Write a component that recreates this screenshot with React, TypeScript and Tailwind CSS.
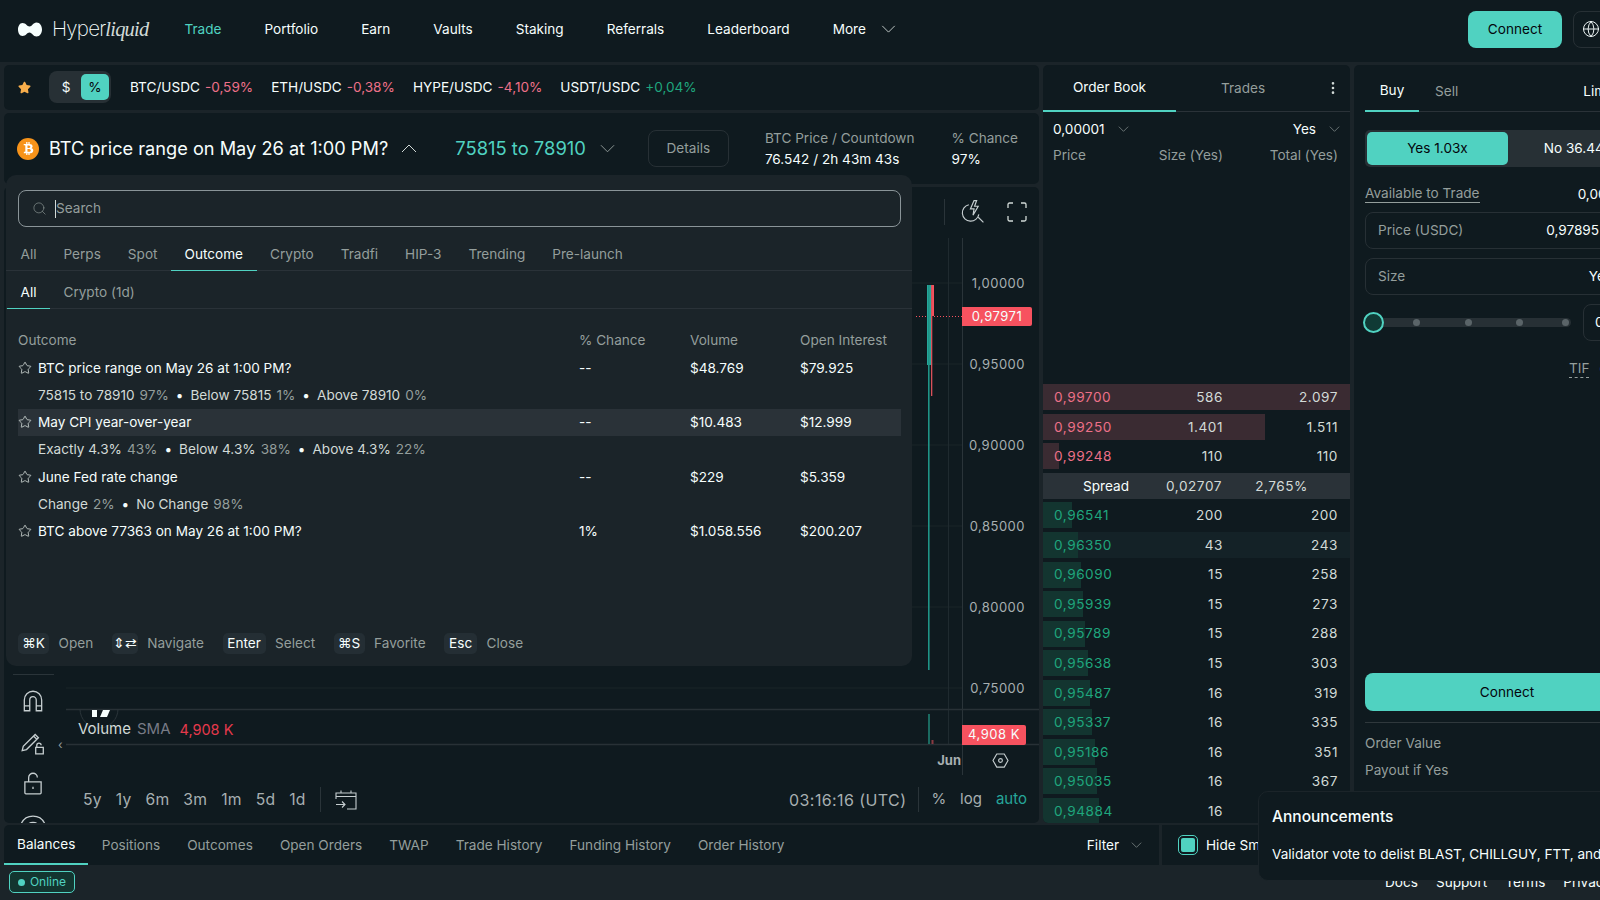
import { Search, Star, Globe, EllipsisVertical } from "lucide-react";
import { FaBtc, FaStar } from "react-icons/fa";

const Chevron = ({ up = false, className = "" }: { up?: boolean; className?: string }) => (
  <svg viewBox="0 0 16 9" fill="none" stroke="currentColor" strokeWidth="1" className={className}>
    <polyline points={up ? "1,8 8,1 15,8" : "1,1 8,8 15,1"} />
  </svg>
);

const navItems = ["Portfolio", "Earn", "Vaults", "Staking", "Referrals", "Leaderboard"];

const tickers = [
  { name: "BTC/USDC", value: "-0,59%", up: false },
  { name: "ETH/USDC", value: "-0,38%", up: false },
  { name: "HYPE/USDC", value: "-4,10%", up: false },
  { name: "USDT/USDC", value: "+0,04%", up: true },
];

const asks = [
  { price: "0,99700", size: "586", total: "2.097", bar: 308 },
  { price: "0,99250", size: "1.401", total: "1.511", bar: 222 },
  { price: "0,99248", size: "110", total: "110", bar: 16 },
];

const bids = [
  { price: "0,96541", size: "200", total: "200", bar: 29 },
  { price: "0,96350", size: "43", total: "243", bar: 35 },
  { price: "0,96090", size: "15", total: "258", bar: 38 },
  { price: "0,95939", size: "15", total: "273", bar: 40 },
  { price: "0,95789", size: "15", total: "288", bar: 42 },
  { price: "0,95638", size: "15", total: "303", bar: 45 },
  { price: "0,95487", size: "16", total: "319", bar: 47 },
  { price: "0,95337", size: "16", total: "335", bar: 49 },
  { price: "0,95186", size: "16", total: "351", bar: 52 },
  { price: "0,95035", size: "16", total: "367", bar: 54 },
  { price: "0,94884", size: "16", total: "383", bar: 56 },
];

const markets = [
  {
    name: "BTC price range on May 26 at 1:00 PM?",
    chance: "--",
    volume: "$48.769",
    oi: "$79.925",
    subs: [
      ["75815 to 78910", "97%"],
      ["Below 75815", "1%"],
      ["Above 78910", "0%"],
    ],
  },
  {
    name: "May CPI year-over-year",
    chance: "--",
    volume: "$10.483",
    oi: "$12.999",
    hover: true,
    subs: [
      ["Exactly 4.3%", "43%"],
      ["Below 4.3%", "38%"],
      ["Above 4.3%", "22%"],
    ],
  },
  {
    name: "June Fed rate change",
    chance: "--",
    volume: "$229",
    oi: "$5.359",
    subs: [
      ["Change", "2%"],
      ["No Change", "98%"],
    ],
  },
  { name: "BTC above 77363 on May 26 at 1:00 PM?", chance: "1%", volume: "$1.058.556", oi: "$200.207", subs: [] },
];

const hints = [
  { key: "⌘K", label: "Open", className: "w-[31px]" },
  { key: "⇕⇄", label: "Navigate", className: "w-[26px]" },
  { key: "Enter", label: "Select", className: "w-[43px]" },
  { key: "⌘S", label: "Favorite", className: "w-[31px]" },
  { key: "Esc", label: "Close", className: "w-[33px]" },
];

const sliderDots = ["ml-[48.5px]", "ml-[45px]", "ml-[44px]", "ml-[39px]"];

const BookRow = ({ row, side, hover }: { row: { price: string; size: string; total: string; bar: number }; side: "ask" | "bid"; hover?: boolean }) => (
  <div className={`relative h-[26px] ${hover ? "bg-[#142227]" : ""}`}>
    <div
      className={`absolute left-0 top-0 h-full ${side === "ask" ? "bg-[#3a2b32]" : "bg-[#133530]"}`}
      style={{ width: row.bar }}
    />
    <div className="relative grid h-full grid-cols-[89px_80px_115px] items-center px-[11px] text-[13.6px] tracking-[0.55px] text-[#d2dad7]">
      <span className={side === "ask" ? "text-[#ed7088]" : "text-[#1fa67d]"}>{row.price}</span>
      <span className="text-right">{row.size}</span>
      <span className="text-right">{row.total}</span>
    </div>
  </div>
);

const MarketDropdown = () => (
  <div className="absolute left-[6px] top-[175px] flex h-[491px] w-[906px] flex-col rounded-[10px] bg-[#1b2429] text-[13.6px]">
    <div className="mx-[12px] mt-[15px] flex h-[37px] w-[883px] items-center rounded-[8px] border border-[#8a9498] pl-[13px]">
      <Search size={15} strokeWidth={1} className="text-[#949e9c]" />
      <span className="ml-[8px] h-[18px] w-px bg-[#d2dad7]" />
      <span className="text-[#949e9c]">Search</span>
    </div>
    <div className="mt-[5px] flex h-[39px] items-stretch border-b border-[#2a3238] pl-px text-[#949e9c]">
      {["All", "Perps", "Spot", "Outcome", "Crypto", "Tradfi", "HIP-3", "Trending", "Pre-launch"].map((t) => (
        <span
          key={t}
          className={`flex items-center px-[13.5px] pt-[6px] ${t === "Outcome" ? "-mb-px border-b border-[#50d2c1] text-[#f6fefd]" : ""}`}
        >
          {t}
        </span>
      ))}
    </div>
    <div className="flex h-[38px] items-stretch border-b border-[#2a3238] pl-px text-[#949e9c]">
      <span className="-mb-px flex items-center border-b border-[#50d2c1] px-[13.5px] pt-[6px] text-[#f6fefd]">All</span>
      <span className="flex items-center px-[13.5px] pt-[6px]">Crypto (1d)</span>
    </div>
    <div className="ml-[12px] mt-[18px] grid h-[27px] w-[883px] grid-cols-[561px_111px_110px_1fr] items-center text-[#949e9c]">
      <span>Outcome</span>
      <span>% Chance</span>
      <span>Volume</span>
      <span>Open Interest</span>
    </div>
    <div className="ml-[12px] mt-[0.4px] flex w-[883px] flex-col">
      {markets.map((m) => (
        <div key={m.name}>
          <div className={`grid h-[27.2px] grid-cols-[561px_111px_110px_1fr] items-center text-[#f6fefd] ${m.hover ? "bg-[#2a3238]" : ""}`}>
            <span className="flex items-center gap-[6px]">
              <Star size={14} strokeWidth={1.4} className="text-[#d2dad7]" />
              {m.name}
            </span>
            <span>{m.chance}</span>
            <span>{m.volume}</span>
            <span>{m.oi}</span>
          </div>
          {m.subs.length > 0 && (
            <div className="flex h-[27.2px] items-center pl-[20px] text-[#d2dad7]">
              {m.subs.map(([label, pct], i) => (
                <span key={label} className="flex items-center">
                  {i > 0 && <span className="px-[7px] text-[#f6fefd]">•</span>}
                  {label}
                  <span className="ml-[5px] text-[#949e9c]">{pct}</span>
                </span>
              ))}
            </div>
          )}
        </div>
      ))}
    </div>
    <div className="mb-[12px] ml-[12px] mt-auto flex items-center gap-[10px] text-[#949e9c]">
      {hints.map((h) => (
        <div key={h.label} className="mr-[8.5px] flex items-center gap-[9.5px]">
          <span className={`flex h-[21px] items-center justify-center rounded-[5px] bg-[#242e34] text-[#f6fefd] ${h.className}`}>
            {h.key}
          </span>
          {h.label}
        </div>
      ))}
    </div>
  </div>
);

const ChartDrawing = () => (
  <svg viewBox="66 233 973 590" className="absolute left-[62px] top-0 h-[590px] w-[973px]" fill="none">
    {[283, 364, 445, 526, 607, 688].map((y) => (
      <line key={y} x1="66" x2="962" y1={y} y2={y} stroke="#1b2529" />
    ))}
    <line x1="948.5" x2="948.5" y1="238" y2="744" stroke="#1f2a2f" />
    <line x1="962.5" x2="962.5" y1="238" y2="775" stroke="#2a3439" />
    <line x1="66" x2="1039" y1="709.5" y2="709.5" stroke="#283136" strokeWidth="1.5" />
    <line x1="66" x2="1039" y1="744.5" y2="744.5" stroke="#283136" strokeWidth="1.5" />
    <line x1="916" x2="962" y1="316.5" y2="316.5" stroke="#f7525f" strokeDasharray="1 2" />
    <rect x="927" y="285" width="4" height="80" fill="#26a69a" />
    <rect x="928" y="285" width="1.6" height="385" fill="#1f9487" />
    <rect x="931" y="285" width="3" height="31" fill="#f7525f" />
    <rect x="931" y="285" width="1.3" height="111" fill="#d9505a" />
    <rect x="928" y="714" width="2" height="30" fill="#1b6b61" />
    <rect x="931.5" y="740" width="2" height="4" fill="#8a3a42" />
    <path d="M80 709 a19 19 0 0 0 38 0" stroke="#2a3439" />
    <polygon points="92,710 97,710 97,717 92,717" fill="#f6fefd" />
    <polygon points="103,710 110,710 107,717 100,717" fill="#f6fefd" />
  </svg>
);

const ToolIcon = ({ children }: { children: React.ReactNode }) => (
  <svg viewBox="0 0 24 24" fill="none" stroke="#c6ced0" strokeWidth="1.2" className="h-[26px] w-[26px] shrink-0">
    {children}
  </svg>
);

const ChartPanel = () => (
  <div className="flex h-[636px] flex-col overflow-hidden rounded-[5px] bg-[#0f1a1f]">
    <div className="flex h-[46px] shrink-0 items-center justify-end pr-[12px] pt-[3px]">
      <span className="mr-[15px] h-[26px] w-px bg-[#2a3439]" />
      <svg viewBox="0 0 24 24" fill="none" stroke="#c6ced0" strokeWidth="1.1" className="mr-[22px] h-[25px] w-[25px]">
        <path d="M8.5 5.5a8 8 0 1 0 9.6 9.3" />
        <path d="M17.5 17.5l5 5" />
        <path d="M13.5 1.5l-3.5 8h3.5l-1 6 5-8.5h-3.5l2-5.5z" />
      </svg>
      <svg viewBox="0 0 20 20" fill="none" stroke="#d2dad7" strokeWidth="1.3" className="h-[20px] w-[20px]">
        <path d="M1 6V2.5A1.5 1.5 0 0 1 2.5 1H6M14 1h3.5A1.5 1.5 0 0 1 19 2.5V6M19 14v3.5a1.5 1.5 0 0 1-1.5 1.5H14M6 19H2.5A1.5 1.5 0 0 1 1 17.500V14" />
      </svg>
    </div>
    <div className="relative flex flex-1">
      <div className="flex h-[590px] w-[62px] shrink-0 flex-col items-center overflow-hidden pr-[4px] pt-[441px]">
        <span className="h-px w-[41px] shrink-0 bg-[#2a3439]" />
        <div className="mt-[13px] flex flex-col items-center gap-[15px]">
          <ToolIcon>
            <path d="M4 21v-10a8 8 0 0 1 16 0v10h-5v-10a3 3 0 0 0-6 0v10zM4 16.500h5M15 16.500h5" />
          </ToolIcon>
          <ToolIcon>
            <path d="M2 20l1-4L14 5l3 3L6 19zM12.500 6.500l3 3" />
            <path d="M15.500 17v-2a2 2 0 0 1 4 0M14.500 17h7v6h-7z" />
          </ToolIcon>
          <ToolIcon>
            <path d="M8 11V7a4 4 0 0 1 8 0M4.500 11h15v10a1 1 0 0 1-1 1h-13a1 1 0 0 1-1-1zM12 15.500v2" />
          </ToolIcon>
          <ToolIcon>
            <path d="M1 12a12 12 0 0 1 22 0M6 14a7 7 0 0 1 12 0" />
          </ToolIcon>
        </div>
      </div>
      <span className="absolute left-[54px] top-[506px] text-[12px] leading-none text-[#949e9c]">‹</span>
      <ChartDrawing />
      <div className="relative flex flex-1 flex-col text-[13px] text-[#a7afb1]">
        <div className="flex h-[476px] flex-col items-end gap-[65px] pr-[14px] pt-[42px] tracking-[0.5px]">
          {["1,00000", "0,95000", "0,90000", "0,85000", "0,80000", "0,75000"].map((p) => (
            <span key={p} className="h-[16px] leading-[16px]">{p}</span>
          ))}
        </div>
        <span className="absolute left-[896px] top-[74px] flex h-[19px] w-[70px] items-center justify-center rounded-r-[2px] bg-[#f7525f] tracking-[0.5px] text-[#f6fefd]">
          0,97971
        </span>
        <div className="relative flex h-[35px] items-center pl-[12px] pt-[6px] text-[15px]">
          <span className="text-[#d2dad7]">Volume</span>
          <span className="ml-[6px] text-[#787b86]">SMA</span>
          <span className="ml-[9px] text-[14.5px] text-[#e5394c]">4,908 K</span>
          <span className="absolute left-[896px] top-[16px] flex h-[20px] w-[64px] items-center justify-center rounded-r-[2px] bg-[#f7525f] text-[13px] tracking-[0.5px] text-[#f6fefd]">
            4,908 K
          </span>
        </div>
        <div className="flex h-[33px] items-center justify-end gap-[31px] pr-[30px]">
          <span className="font-bold">Jun</span>
          <svg viewBox="0 0 18 16" fill="none" stroke="#c6ced0" strokeWidth="1.2" className="h-[15px] w-[17px]">
            <path d="M5 1h8l4 7-4 7H5L1 8z" />
            <circle cx="9" cy="8" r="2" />
          </svg>
        </div>
        <div className="flex h-[46px] items-center pb-[1px] pl-[17px] pr-[12px] text-[15px]">
          <div className="flex items-center gap-[14px] text-[15.7px] tracking-[0.2px]">
            {["5y", "1y", "6m", "3m", "1m", "5d", "1d"].map((t) => (
              <span key={t}>{t}</span>
            ))}
          </div>
          <span className="mx-[14px] h-[25px] w-px bg-[#2a3439]" />
          <svg viewBox="0 0 22 22" fill="none" stroke="#c6ced0" strokeWidth="1.1" className="h-[22px] w-[22px]">
            <path d="M1 10V4h20v16h-9M1 7.500h20M6 1.500v3M16 1.500v3M1 15.500h9M7 12.500l3 3-3 3" />
          </svg>
          <span className="ml-auto text-[16px] tracking-[0.4px]">03:16:16 (UTC)</span>
          <span className="mx-[12px] h-[25px] w-px bg-[#2a3439]" />
          <span>%</span>
          <span className="ml-[14px]">log</span>
          <span className="ml-[14px] text-[#26a69a]">auto</span>
        </div>
      </div>
    </div>
  </div>
);

const OrderBook = () => (
  <div className="h-[758px] w-[307px] shrink-0 overflow-hidden rounded-[5px] bg-[#0f1a1f] text-[13.6px]">
    <div className="flex h-[47px] items-stretch border-b border-[#2a3238]">
      <span className="-mb-px flex w-[133px] items-center justify-center border-b-2 border-[#50d2c1] text-[#f6fefd]">Order Book</span>
      <span className="flex w-[134px] items-center justify-center text-[#949e9c]">Trades</span>
      <span className="flex flex-1 items-center justify-center pl-[6px] text-[#d2dad7]">
        <EllipsisVertical size={16} strokeWidth={2} />
      </span>
    </div>
    <div className="flex h-[34px] items-center justify-between px-[10px] text-[#f6fefd]">
      <span className="flex items-center gap-[13px]">
        0,00001
        <Chevron className="h-[6px] w-[11px] text-[#949e9c]" />
      </span>
      <span className="flex items-center gap-[13px]">
        Yes
        <Chevron className="h-[6px] w-[11px] text-[#949e9c]" />
      </span>
    </div>
    <div className="-mt-px grid h-[18px] grid-cols-[90px_80px_115px] items-center pl-[10px] text-[#949e9c]">
      <span>Price</span>
      <span className="whitespace-nowrap text-right">Size (Yes)</span>
      <span className="whitespace-nowrap text-right">Total (Yes)</span>
    </div>
    <div className="mt-[221.3px] flex flex-col gap-[3.55px]">
      {asks.map((r) => (
        <BookRow key={r.price} row={r} side="ask" />
      ))}
      <div className="grid h-[26px] grid-cols-[86px_93px_86px] items-center bg-[#2a3238] text-right tracking-[0.55px] text-[#d2dad7]">
        <span className="tracking-normal text-[#f6fefd]">Spread</span>
        <span>0,02707</span>
        <span>2,765%</span>
      </div>
      {bids.map((r) => (
        <BookRow key={r.price} row={r} side="bid" hover={r.price === "0,96350"} />
      ))}
    </div>
  </div>
);

const OrderForm = () => (
  <div className="h-[800px] w-[306px] shrink-0 overflow-hidden rounded-[5px] bg-[#0f1a1f] px-[11px] text-[13.6px] text-[#949e9c]">
    <div className="flex h-[47px] w-[284px] items-stretch border-b border-[#2a3238]">
      <span className="-mb-px flex w-[54px] items-center justify-center border-b-2 border-[#50d2c1] pt-[6px] text-[#f6fefd]">Buy</span>
      <span className="ml-[16px] flex items-center pt-[6px]">Sell</span>
      <span className="ml-[125px] flex items-center pt-[6px] text-[#f6fefd]">Limit</span>
    </div>
    <div className="mt-[18px] flex h-[37px] w-[284px] items-center rounded-[5px] bg-[#273035] p-[2px] text-[#f6fefd]">
      <span className="flex h-full w-[141px] items-center justify-center rounded-[5px] bg-[#50d2c1] text-[#04060c]">Yes 1.03x</span>
      <span className="flex flex-1 items-center justify-center">No 36.44x</span>
    </div>
    <div className="mt-[18px] flex h-[18px] w-[284px] items-center justify-between">
      <span className="border-b border-[#949e9c] leading-[17px]">Available to Trade</span>
      <span className="text-[#f6fefd]">0,00 USDC</span>
    </div>
    <div className="mt-[9px] flex h-[37px] w-[284px] items-center justify-between rounded-[8px] border border-[#273035] pl-[12px] pr-[49px]">
      <span>Price (USDC)</span>
      <span className="text-[#f6fefd]">0,97895</span>
    </div>
    <div className="mt-[9px] flex h-[37px] w-[284px] items-center justify-between rounded-[8px] border border-[#273035] pl-[12px] pr-[36px]">
      <span>Size</span>
      <span className="text-[#f6fefd]">Yes</span>
    </div>
    <div className="mt-[9px] flex h-[37px] w-[284px] items-center justify-between">
      <div className="relative ml-[-1px] flex h-[9px] w-[207px] items-center rounded-full bg-[#273035]">
        <span className="absolute -left-[1px] top-[-6px] h-[21px] w-[21px] rounded-full border-2 border-[#50d2c1] bg-[#103a35]" />
        {sliderDots.map((d) => (
          <span key={d} className={`h-[7px] w-[7px] rounded-full bg-[#5a6468] ${d}`} />
        ))}
      </div>
      <span className="flex h-full w-[66px] items-center rounded-[8px] border border-[#273035] pl-[11px] text-[#f6fefd]">0</span>
    </div>
    <div className="mt-[19px] flex h-[18px] w-[284px] items-center pl-[204px]">
      <span className="border-b border-dashed border-[#949e9c] leading-[17px]">TIF</span>
      <span className="ml-[10px] text-[#f6fefd]">GTC</span>
    </div>
    <div className="mt-[295px] flex h-[38px] w-[284px] items-center justify-center rounded-[8px] bg-[#50d2c1] text-[#04060c]">Connect</div>
    <div className="mt-[11px] h-px w-[284px] bg-[#2f383c]" />
    <div className="mt-[10px] h-[18px]">Order Value</div>
    <div className="mt-[9px] h-[18px]">Payout if Yes</div>
  </div>
);

const App = () => (
  <div className="relative flex h-[900px] w-[1600px] flex-col overflow-hidden bg-[#1b2429] font-['Inter',sans-serif] whitespace-nowrap">
    <nav className="flex h-[62px] shrink-0 items-center bg-[#0f1a1f] pb-[4px] pl-[18px] text-[13.6px] text-[#f6fefd]">
      <svg viewBox="0 0 24 15" fill="#f6fefd" className="h-[15px] w-[24px]">
        <path d="M11.500 4.500C9 4.500 8 1 4.500 1 1.500 1 0 4.500 0 7.500S1.500 14 4.500 14c3.500 0 4.500-3.500 7-3.500s3.500 4 7 4c3.500 0 5.500-3.500 5.500-7s-2-7-5.500-7c-3.500 0-4.500 4-7 4z" />
      </svg>
      <span className="ml-[10px] text-[20.5px] font-extralight tracking-[-0.8px]">
        Hyper<span className="font-['Liberation_Serif',serif] italic text-[#d2dad7]">liquid</span>
      </span>
      <span className="ml-[36px] text-[#50d2c1]">Trade</span>
      {navItems.map((n) => (
        <span key={n} className="ml-[43px]">{n}</span>
      ))}
      <span className="ml-[43px]">More</span>
      <Chevron className="ml-[15px] h-[8px] w-[15px] text-[#d2dad7]" />
      <span className="ml-auto flex h-[37px] w-[94px] items-center justify-center rounded-[8px] bg-[#50d2c1] text-[#04060c]">Connect</span>
      <span className="ml-[11px] mr-[-30px] flex h-[37px] w-[57px] items-center rounded-[8px] border border-[#273035] pl-[8px]">
        <Globe size={18} strokeWidth={1.25} />
      </span>
    </nav>

    <div className="flex h-[803px] shrink-0 gap-[4px] pl-[4px] pt-[3px]">
      <div className="flex w-[1346px] shrink-0 flex-col gap-[2px]">
        <div className="flex gap-[4px]">
          <div className="flex w-[1035px] shrink-0 flex-col gap-[3px]">
            <div className="flex h-[45px] items-center rounded-[5px] bg-[#0f1a1f] pb-[1px] pl-[14px] text-[13.6px] text-[#f6fefd]">
              <FaStar size={13} className="text-[#f7ad4b]" />
              <div className="ml-[18px] flex h-[32px] w-[62px] items-center rounded-[8px] bg-[#273035] pl-[2px]">
                <span className="flex w-[30px] justify-center">$</span>
                <span className="flex h-[26px] w-[28px] items-center justify-center rounded-[5px] bg-[#50d2c1] text-[#04060c]">%</span>
              </div>
              <div className="ml-[19px] flex items-center gap-[18px]">
                {tickers.map((t) => (
                  <span key={t.name}>
                    {t.name}
                    <span className={`ml-[5px] ${t.up ? "text-[#1fa67d]" : "text-[#ed7088]"}`}>{t.value}</span>
                  </span>
                ))}
              </div>
            </div>
            <div className="flex h-[71px] items-center rounded-[5px] bg-[#0f1a1f] pl-[13px] text-[#f6fefd]">
              <span className="flex h-[22px] w-[22px] items-center justify-center rounded-full bg-[#f7931a] text-[13px] text-white">
                <FaBtc />
              </span>
              <span className="ml-[10px] text-[18.2px]">BTC price range on May 26 at 1:00 PM?</span>
              <Chevron up className="ml-[13px] h-[9px] w-[16px] text-[#d2dad7]" />
              <span className="ml-[38px] text-[18.4px] text-[#50d2c1]">75815 to 78910</span>
              <Chevron className="ml-[14px] h-[9px] w-[15px] text-[#949e9c]" />
              <span className="ml-[33px] flex h-[37px] w-[81px] items-center justify-center rounded-[8px] border border-[#273035] text-[13.6px] text-[#949e9c]">
                Details
              </span>
              <div className="ml-[36px] flex flex-col text-[13.6px]">
                <span className="text-[#949e9c]">BTC Price / Countdown</span>
                <span>76.542 / 2h 43m 43s</span>
              </div>
              <div className="ml-[37px] flex flex-col text-[13.6px]">
                <span className="text-[#949e9c]">% Chance</span>
                <span>97%</span>
              </div>
            </div>
            <ChartPanel />
          </div>
          <OrderBook />
        </div>
        <div className="flex h-[40px] items-stretch rounded-[5px] bg-[#0f1a1f] text-[13.6px] text-[#949e9c]">
          <span className="flex items-center border-b-2 border-[#50d2c1] px-[13px] text-[#f6fefd]">Balances</span>
          {["Positions", "Outcomes", "Open Orders", "TWAP", "Trade History", "Funding History", "Order History"].map((t) => (
            <span key={t} className="flex items-center px-[13.500px]">{t}</span>
          ))}
          <span className="ml-auto flex items-center gap-[12px] text-[#f6fefd]">
            Filter
            <Chevron className="h-[6px] w-[11px] text-[#949e9c]" />
          </span>
          <span className="ml-[17px] w-[3px] bg-[#1b2429]" />
          <span className="ml-[17px] flex w-[171px] items-center gap-[9px] text-[#f6fefd]">
            <span className="h-[18px] w-[18px] rounded-[4px] border-2 border-[#0f1a1f] bg-[#50d2c1] outline outline-[#50d2c1]" />
            Hide Small Balances
          </span>
        </div>
      </div>
      <OrderForm />
    </div>

    <footer className="flex flex-1 items-center pb-[1px] pl-[9px] text-[13.6px] text-[#f6fefd]">
      <span className="flex h-[22px] w-[66px] shrink-0 items-center justify-center gap-[5px] rounded-[5px] border border-[#50d2c1] bg-[#133530] text-[12px] text-[#50d2c1]">
        <span className="h-[7px] w-[7px] rounded-full bg-[#50d2c1]" />
        Online
      </span>
      <div className="ml-[1310px] flex shrink-0 gap-[18px]">
        <span>Docs</span>
        <span>Support</span>
        <span>Terms</span>
        <span>Privacy Policy</span>
      </div>
    </footer>

    <MarketDropdown />

    <div className="absolute left-[1258px] top-[791px] h-[90px] w-[420px] rounded-[10px] border border-[#1b2429] bg-[#0f1a1f] pl-[13px] text-[#f6fefd]">
      <div className="mt-[13px] text-[15.5px] font-medium">Announcements</div>
      <div className="mt-[16px] text-[13.6px]">Validator vote to delist BLAST, CHILLGUY, FTT, and others</div>
    </div>
  </div>
);

export default App;
